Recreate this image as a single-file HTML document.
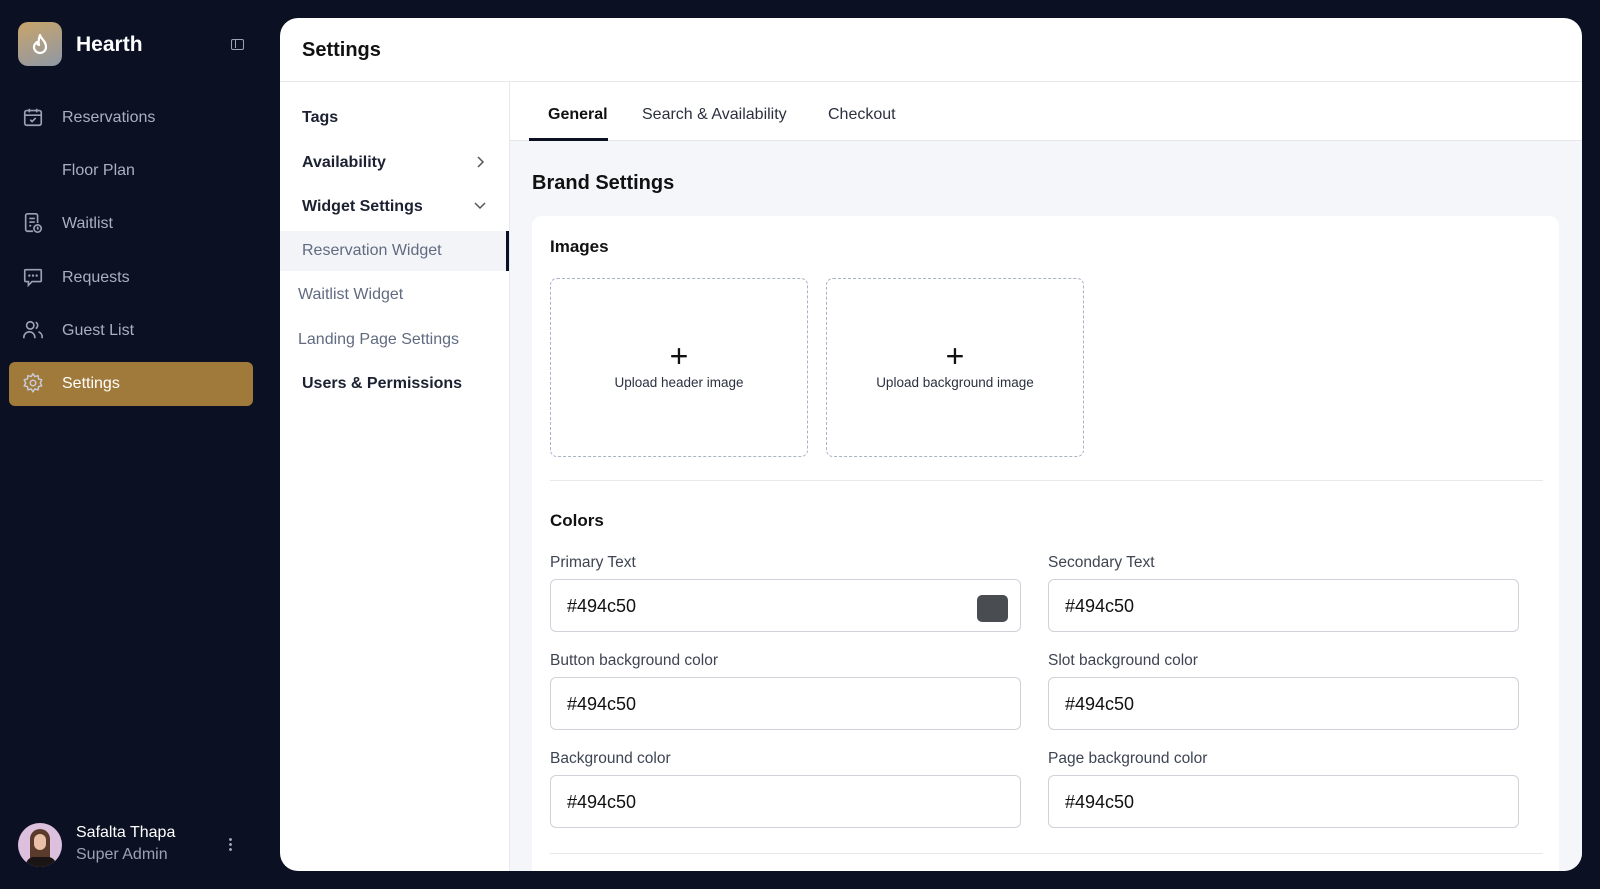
<!DOCTYPE html>
<html><head><style>
*{box-sizing:border-box;margin:0;padding:0}
body{width:1600px;height:889px;background:#0b1023;font-family:"Liberation Sans",sans-serif;position:relative;overflow:hidden}
.a{position:absolute}
.nav{color:#a9b0c0;font-size:16px;left:62px}
.nav svg{position:absolute;left:-40px;top:-3px}
.main{left:280px;top:18px;width:1302px;height:853px;background:#fff;border-radius:18px;overflow:hidden}
.sub{font-size:16px;color:#1b2130;font-weight:bold}
.sub2{font-size:16px;color:#606b80}
.lbl{font-size:15.5px;color:#3d4452}
.inp{height:53px;border:1.5px solid #cfd2d8;border-radius:6px;background:#fff;font-size:18px;color:#111;padding:16px 16px}
.up{border:1.5px dashed #a9b3c6;border-radius:7px;width:258px;height:179px;text-align:center;font-size:13.5px;color:#2b3140}
.up b{display:block;font-weight:normal;font-size:32px;line-height:30px;margin-top:62px;margin-bottom:4px;color:#111}
</style></head><body>
<div class="a" style="left:18px;top:22px;width:44px;height:44px;border-radius:10px;background:linear-gradient(160deg,#c9a56a,#8e97a6)">
<svg width="44" height="44" viewBox="0 0 44 44"><path d="M22 13c1 4 6 6 6 12a6 6 0 0 1-12 0c0-3 2-4 3-5 0 2 1 3 2 3-1-3 0-7 1-10z" fill="none" stroke="#fff" stroke-width="2.2" stroke-linejoin="round"/></svg></div>
<div class="a" style="left:76px;top:33px;color:#fff;font-size:21px;font-weight:bold">Hearth</div>
<div class="a" style="left:231px;top:39px;width:13px;height:11px;border:1.5px solid #9aa2b3;border-radius:2px"><div style="width:4px;height:8px;border-right:1.5px solid #9aa2b3"></div></div>
<div class="a nav" style="top:109px"><svg width="22" height="22" viewBox="0 0 24 24" fill="none" stroke="#9aa2b3" stroke-width="1.8"><rect x="3" y="5" width="18" height="16" rx="2"/><path d="M3 10h18M8 3v4M16 3v4M9 15l2 2 4-4"/></svg>Reservations</div>
<div class="a nav" style="top:162px">Floor Plan</div>
<div class="a nav" style="top:215px"><svg width="22" height="22" viewBox="0 0 24 24" fill="none" stroke="#9aa2b3" stroke-width="1.8"><path d="M12 21H6a2 2 0 0 1-2-2V4a2 2 0 0 1 2-2h9a2 2 0 0 1 2 2v8M8 7h6M8 11h6M8 15h2"/><circle cx="17" cy="18" r="4"/><path d="M17 16v2l1 1"/></svg>Waitlist</div>
<div class="a nav" style="top:269px"><svg width="22" height="22" viewBox="0 0 24 24" fill="none" stroke="#9aa2b3" stroke-width="1.8"><path d="M4 4h16a1 1 0 0 1 1 1v11a1 1 0 0 1-1 1h-9l-4 4v-4H4a1 1 0 0 1-1-1V5a1 1 0 0 1 1-1z"/><path d="M8 10.5h.01M12 10.5h.01M16 10.5h.01" stroke-width="2.6" stroke-linecap="round"/></svg>Requests</div>
<div class="a nav" style="top:322px"><svg width="22" height="22" viewBox="0 0 24 24" fill="none" stroke="#9aa2b3" stroke-width="1.8"><circle cx="9" cy="7" r="4"/><path d="M2 21v-1a6 6 0 0 1 12 0v1M15 3.5a4 4 0 0 1 0 7M18 14a6 6 0 0 1 4 6v1"/></svg>Guest List</div>
<div class="a" style="left:9px;top:362px;width:244px;height:44px;background:#a07a3a;border-radius:6px"></div>
<div class="a nav" style="top:375px;color:#fff"><svg width="22" height="22" viewBox="0 0 24 24" fill="none" stroke="#c8cbd6" stroke-width="1.6"><circle cx="12" cy="12" r="3"/><path d="M12 2l2 3 3.5-1 .5 3.5 3.5 1-1.5 3.5 1.5 3-3.5 1-.5 3.5-3.5-1-2 3-2-3-3.5 1-.5-3.5-3.5-1L4 12 2.5 8.5 6 7.5 6.5 4 10 5z"/></svg>Settings</div>
<div class="a" style="left:18px;top:823px;width:44px;height:44px;border-radius:50%;background:#dcc0de;overflow:hidden"><div style="position:absolute;left:12px;top:6px;width:20px;height:40px;border-radius:10px 10px 0 0;background:#5a3a2a"></div><div style="position:absolute;left:16px;top:11px;width:12px;height:16px;border-radius:6px;background:#e8c0a8"></div><div style="position:absolute;left:8px;top:34px;width:30px;height:14px;border-radius:8px 8px 0 0;background:#1a1414"></div></div>
<div class="a" style="left:76px;top:824px;color:#fff;font-size:16px">Safalta Thapa</div>
<div class="a" style="left:76px;top:846px;color:#9aa2b3;font-size:16px">Super Admin</div>
<div class="a" style="left:229px;top:837px;width:3px;height:14px;background:radial-gradient(circle,#9aa2b3 1.3px,transparent 1.6px) 0 0/3px 5px"></div>
<div class="a main">
<div class="a" style="left:22px;top:21px;font-size:20px;font-weight:bold;color:#111">Settings</div>
<div class="a" style="left:0;top:63px;width:1302px;height:1px;background:#e6e8ec"></div>
<div class="a" style="left:229px;top:64px;width:1px;height:800px;background:#e6e8ec"></div>
<div class="a sub" style="left:22px;top:91px">Tags</div>
<div class="a sub" style="left:22px;top:136px">Availability</div>
<svg class="a" style="left:194px;top:136px" width="12" height="16" viewBox="0 0 12 16"><path d="M4 3l5 5-5 5" fill="none" stroke="#555" stroke-width="1.5"/></svg>
<div class="a sub" style="left:22px;top:180px">Widget Settings</div>
<svg class="a" style="left:192px;top:182px" width="16" height="12" viewBox="0 0 16 12"><path d="M3 3l5 5 5-5" fill="none" stroke="#555" stroke-width="1.5"/></svg>
<div class="a" style="left:0;top:213px;width:226px;height:40px;background:#f3f4f7"></div>
<div class="a" style="left:226px;top:213px;width:3px;height:40px;background:#0b1023"></div>
<div class="a sub2" style="left:22px;top:224px">Reservation Widget</div>
<div class="a sub2" style="left:18px;top:268px">Waitlist Widget</div>
<div class="a sub2" style="left:18px;top:313px">Landing Page Settings</div>
<div class="a sub" style="left:22px;top:357px">Users &amp; Permissions</div>
<div class="a" style="left:230px;top:123px;width:1072px;height:740px;background:#f5f6f9"></div>
<div class="a" style="left:230px;top:122px;width:1072px;height:1px;background:#e6e8ec"></div>
<div class="a" style="left:268px;top:88px;font-size:16px;color:#111;font-weight:bold">General</div>
<div class="a" style="left:249px;top:120px;width:79px;height:3px;background:#0b1023"></div>
<div class="a" style="left:362px;top:88px;font-size:16px;color:#2b3140">Search &amp; Availability</div>
<div class="a" style="left:548px;top:88px;font-size:16px;color:#2b3140">Checkout</div>
<div class="a" style="left:252px;top:154px;font-size:20px;font-weight:bold;color:#111">Brand Settings</div>
<div class="a" style="left:252px;top:198px;width:1027px;height:680px;background:#fff;border-radius:10px"></div>
<div class="a" style="left:270px;top:219px;font-size:17px;font-weight:bold;color:#111">Images</div>
<div class="a up" style="left:270px;top:260px"><b>+</b>Upload header image</div>
<div class="a up" style="left:546px;top:260px"><b>+</b>Upload background image</div>
<div class="a" style="left:270px;top:462px;width:993px;height:1px;background:#e6e8ec"></div>
<div class="a" style="left:270px;top:493px;font-size:17px;font-weight:bold;color:#111">Colors</div>
<div class="a lbl" style="left:270px;top:536px">Primary Text</div>
<div class="a lbl" style="left:768px;top:536px">Secondary Text</div>
<div class="a inp" style="left:270px;top:561px;width:471px">#494c50<div style="position:absolute;right:12px;top:15px;width:31px;height:27px;border-radius:5px;background:#494c50"></div></div>
<div class="a inp" style="left:768px;top:561px;width:471px">#494c50</div>
<div class="a lbl" style="left:270px;top:634px">Button background color</div>
<div class="a lbl" style="left:768px;top:634px">Slot background color</div>
<div class="a inp" style="left:270px;top:659px;width:471px">#494c50</div>
<div class="a inp" style="left:768px;top:659px;width:471px">#494c50</div>
<div class="a lbl" style="left:270px;top:732px">Background color</div>
<div class="a lbl" style="left:768px;top:732px">Page background color</div>
<div class="a inp" style="left:270px;top:757px;width:471px">#494c50</div>
<div class="a inp" style="left:768px;top:757px;width:471px">#494c50</div>
<div class="a" style="left:270px;top:835px;width:993px;height:1px;background:#e6e8ec"></div>
</div>
</body></html>
